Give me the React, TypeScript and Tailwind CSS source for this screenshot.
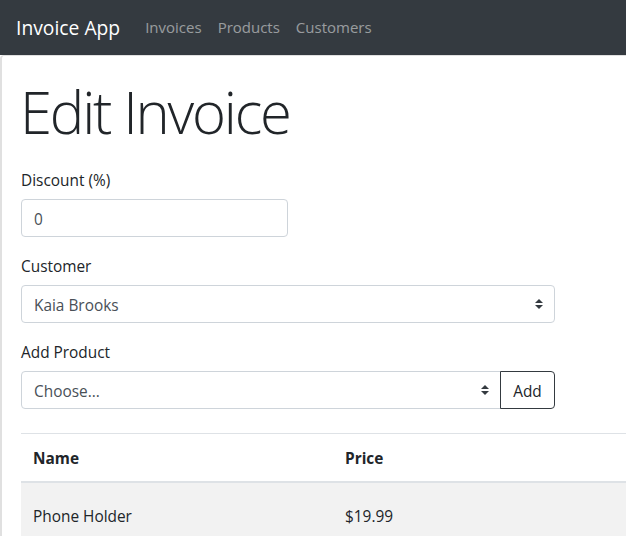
export default function App() {
  const font = { fontFamily: '"Open Sans", "Noto Sans", sans-serif' };
  return (
    <div className="w-[626px] h-[536px] overflow-hidden bg-white text-[#212529]" style={font}>
      <nav className="h-[55px] bg-[#343a40] flex items-center pl-4">
        <span className="text-white text-[19.3px] leading-[30px] mr-[25px]">Invoice App</span>
        <div className="flex gap-4 text-[15px] text-white/50">
          <span>Invoices</span>
          <span>Products</span>
          <span>Customers</span>
        </div>
      </nav>
      <div className="border-l-2 border-t border-[#e0e0e0] rounded-tl-[4px] h-[481px] w-[700px] pl-[19px] pt-[21px] text-[15.4px]">
        <h1 className="text-[58px] font-light leading-[70px] ml-[-1px] mb-[20px] tracking-[-2.2px]">Edit Invoice</h1>
        <div className="mb-4">
          <label className="block leading-6 pt-[2px] mb-[6px]">Discount (%)</label>
          <div className="w-[267px] h-[38px] border border-[#ced4da] rounded-[4px] flex items-center px-3 pt-[3px] text-[#495057]">0</div>
        </div>
        <div className="mb-4">
          <label className="block leading-6 pt-[2px] mb-[6px]">Customer</label>
          <div className="w-[534px] h-[38px] border border-[#ced4da] rounded-[4px] flex items-center justify-between pl-3 pr-[11px] text-[#495057]">
            <span className="pt-[3px]">Kaia Brooks</span>
            <Arrows />
          </div>
        </div>
        <div className="mb-[24px]">
          <label className="block leading-6 pt-[2px] mb-[6px]">Add Product</label>
          <div className="flex w-[534px] h-[38px]">
            <div className="flex-1 border border-[#ced4da] rounded-l-[4px] flex items-center justify-between pl-3 pr-[11px] text-[#495057]">
              <span className="pt-[3px]">Choose...</span>
              <Arrows />
            </div>
            <div className="w-[55px] border border-[#343a40] rounded-r-[4px] flex items-center justify-center pt-[3px] text-[#212529] -ml-px">Add</div>
          </div>
        </div>
        <div className="w-[700px] border-t border-[#dee2e6]">
          <div className="flex h-[49px] pt-[3px] items-center border-b-2 border-[#dee2e6] font-bold">
            <div className="w-[312px] pl-3">Name</div>
            <div className="pl-3">Price</div>
          </div>
          <div className="flex h-[64px] pt-[4px] items-center bg-[#f2f2f2]">
            <div className="w-[312px] pl-3">Phone Holder</div>
            <div className="pl-3">$19.99</div>
          </div>
        </div>
      </div>
    </div>
  );
}

function Arrows() {
  return (
    <svg width="8" height="10" viewBox="0 0 8 10">
      <path d="M4 0 L8 4 H0 Z" fill="#343a40" />
      <path d="M4 10 L8 6 H0 Z" fill="#343a40" />
    </svg>
  );
}
